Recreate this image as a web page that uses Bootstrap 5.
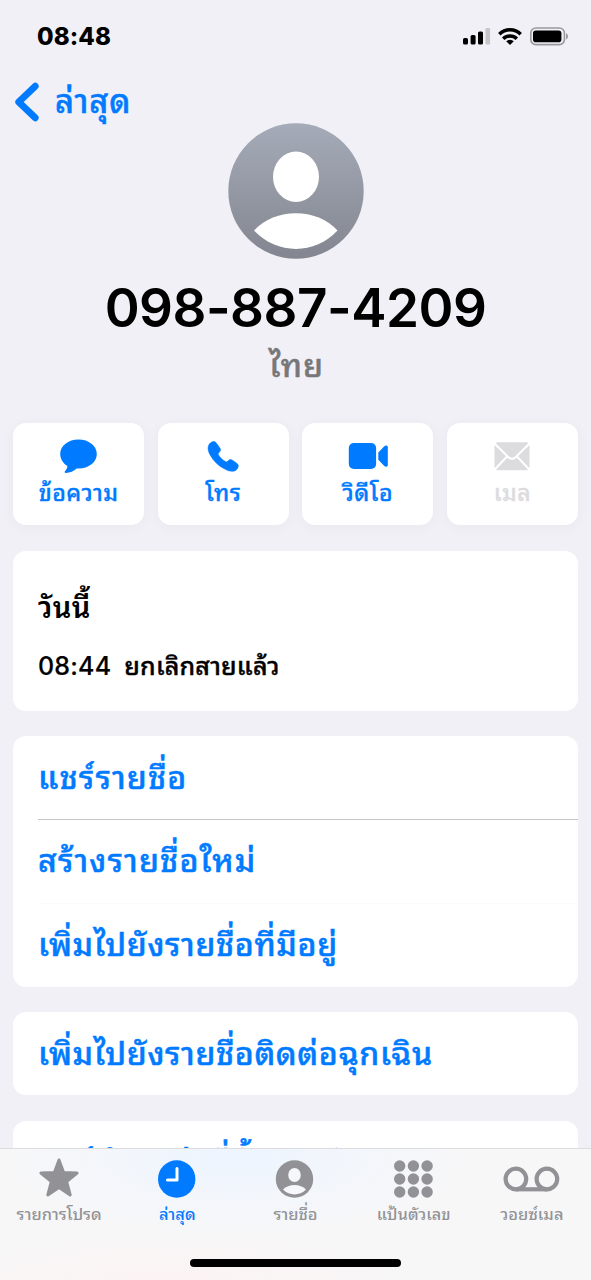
<!DOCTYPE html>
<html lang="th">
<head>
<meta charset="utf-8">
<meta name="viewport" content="width=device-width, initial-scale=1">
<title>098-887-4209</title>
<link href="https://cdn.jsdelivr.net/npm/bootstrap@5.3.0/dist/css/bootstrap.min.css" rel="stylesheet">
<style>
  :root { --ios-blue: #007aff; --ios-gray: #929296; }
  body { background: #f1f0f6; color: #000; font-family: Inter, "Noto Sans Thai Looped", "Noto Sans Thai", "Loma", "Noto Sans", sans-serif; font-weight: 500; }
  .phone { height: 1280px; overflow: hidden; }
  .statusbar { height: 72px; padding: 0 22px 0 37px; }
  .clock { font-size: 24px; font-weight: 800; line-height: 73px; letter-spacing: .1px; }
  .backlink { height: 51px; padding: 8px 0 0 15px; color: var(--ios-blue); font-size: 32.5px; line-height: 40px; letter-spacing: 1px; text-decoration: none; -webkit-text-stroke: .5px; }
  .backlink svg { margin-right: 16px; }
  .phone-number { font-size: 53px; font-weight: 600; line-height: 64px; margin-top: 17px; letter-spacing: -.5px; }
  .place { font-size: 32px; line-height: 40px; margin-top: 6px; padding-left: 2px; color: #77777a; letter-spacing: 1px; -webkit-text-stroke: .5px; }
  .actions { margin-top: 37px; padding: 0 13px; gap: 13.5px; }
  .tile { height: 102px; border-radius: 13px; background: #fff; color: var(--ios-blue); box-shadow: 0 2px 14px rgba(60,60,90,.045); font-size: 23px; line-height: 35px; letter-spacing: .5px; text-decoration: none; padding-top: 15px; -webkit-text-stroke: .35px; }
  .tile svg { height: 38px; flex: none; }
  .tile.off { color: #dcdcde; }
  .sheet { margin: 0 13px; border-radius: 13px; background: #fff; overflow: hidden; }
  .today { margin-top: 26px; height: 160px; padding: 36px 25px 0; }
  .today h2 { font-size: 29px; line-height: 42px; margin: 0; font-weight: 600; letter-spacing: .4px; }
  .call-row { font-size: 25px; line-height: 36px; margin-top: 19px; gap: 13px; }
  .call-row span:first-child { letter-spacing: .2px; -webkit-text-stroke: .2px; }
  .call-row span + span { letter-spacing: .2px; -webkit-text-stroke: .4px; }
  .group { margin-top: 25px; }
  .group + .group + .group { margin-top: 26px; }
  .group + .group:not(:nth-last-child(2)) { margin-top: 25px; }
  .item { display: block; height: 83px; margin-left: 25px; line-height: 83px; font-size: 32px; letter-spacing: 1.2px; color: var(--ios-blue); text-decoration: none; white-space: nowrap; -webkit-text-stroke: .5px; }
  .item + .item { height: 84px; border-top: 1px solid #fafafa; line-height: 82px; }
  .item + .item.ruled { border-top-color: #c6c6c8; }
  .item.tight { letter-spacing: .65px; }
  .tabs { height: 132px; border-top: 1px solid #dcdce0; background: radial-gradient(ellipse 230px 75px at 235px 10px, #eef5ff 0, rgba(238,245,255,0) 100%), radial-gradient(ellipse 260px 50px at 170px 132px, #fcf3f3 0, rgba(252,243,243,0) 100%), #f7f7f8; }
  .tab { color: var(--ios-gray); font-size: 16.4px; line-height: 28px; text-decoration: none; width: 118.2px; padding-top: 9px; }
  .tab svg { height: 42px; flex: none; }
  .tab.on { color: var(--ios-blue); }
  .homebar { width: 211px; height: 8px; bottom: 13px; left: 190px; background: #000; border-radius: 4px; }
</style>
</head>
<body>
<div class="phone d-flex flex-column position-relative">
  <header class="statusbar d-flex justify-content-between flex-shrink-0">
    <div class="clock">08:48</div>
    <svg width="107" height="72" viewBox="462 0 107 72">
      <rect x="463" y="38" width="5" height="6.5" rx="1.6"/><rect x="470.6" y="35" width="5" height="9.5" rx="1.6"/><rect x="478" y="31.5" width="5" height="13" rx="1.6"/><rect x="485.5" y="28" width="4.6" height="16.5" rx="1.3" fill="#c6c6ca"/>
      <g fill="none" stroke="#000" stroke-width="3.5"><path d="M499.3 34.2a15.2 15.2 0 0 1 21.400 0"/><path d="M503.2 38.700a9.700 9.700 0 0 1 13.600 0"/></g><path d="M506.200 41.300a5.500 5.500 0 0 1 7.600 0L510 45z"/>
      <rect x="530.800" y="28" width="33.600" height="16.600" rx="5" fill="none" stroke="#99999e" stroke-width="1.600"/><rect x="533" y="30.400" width="28.400" height="11.800" rx="2.800"/><path d="M566 33.200c2.600.8 2.600 5.400 0 6.400z" fill="#99999e"/>
    </svg>
  </header>
  <a href="#" class="backlink d-flex align-items-center flex-shrink-0"><svg width="24" height="40" viewBox="0 0 24 40"><path d="M20.200 4.200 3.700 20l16.500 15.800" fill="none" stroke="#007aff" stroke-width="6.800" stroke-linecap="round" stroke-linejoin="round"/></svg><span>ล่าสุด</span></a>
  <section class="text-center flex-shrink-0">
    <svg class="d-block mx-auto" width="136" height="136" viewBox="0 0 136 136"><defs><linearGradient id="av" x2="0" y2="1"><stop stop-color="#a5abb8"/><stop offset="1" stop-color="#838690"/></linearGradient></defs><circle cx="68" cy="68" r="67.700" fill="url(#av)"/><ellipse cx="68" cy="53.800" rx="23" ry="25.200" fill="#fff"/><path d="M26 107.500C47 84.500 89 84.500 109.500 107.500C87 132 49 132 26 107.500Z" fill="#fff"/></svg>
    <div class="phone-number">098-887-4209</div>
    <div class="place">ไทย</div>
  </section>
  <nav class="actions d-flex flex-shrink-0">
    <a href="#" class="tile flex-fill w-100 d-flex flex-column align-items-center"><svg width="40" height="38" viewBox="0 0 40 38"><path d="M19.500 1.500c10.300 0 18.300 6.300 18.300 14.500s-8 14.500-18.300 14.500h-1.800c-3 2.600-6.700 4.300-10.700 4.400-1.500 0-1.700-.9-.9-1.800 1.300-1.400 2.200-3.200 2.300-5.100C4 25.300 1.200 21 1.200 16c0-8.200 8-14.500 18.300-14.500z" fill="currentColor"/></svg><span>ข้อความ</span></a>
    <a href="#" class="tile flex-fill w-100 d-flex flex-column align-items-center"><svg width="32" height="38" viewBox="0 0 32 38"><path d="M3.300 5c2-1.800 4.500-2 6-.1l3.500 4.900c1.200 1.800 1 3.100-.7 4.600-1 .9-1.100 1.600-.4 2.800 1.600 2.600 3.600 4.300 6.300 6.100 1.200.8 2 .7 2.900-.3 1.500-1.700 2.900-1.900 4.700-.7l4.200 3c2.100 1.600 2 3.700.2 5.900-2.700 3.100-7.200 2.700-12.200-.1C11.200 27.900 6.300 22.700 3.100 16.900.5 12.200.2 7.800 3.300 5z" fill="currentColor" stroke="currentColor" stroke-width=".5"/></svg><span>โทร</span></a>
    <a href="#" class="tile flex-fill w-100 d-flex flex-column align-items-center"><svg width="40" height="38" viewBox="0 0 40 38"><rect x=".8" y="5" width="27.300" height="26" rx="5" fill="currentColor"/><path d="M30.300 14.500 36.300 8.300c1.300-1.300 3.500-.9 3.500 1v17.600c0 1.900-2.200 2.300-3.500 1L30.300 21.700z" fill="currentColor"/></svg><span>วิดีโอ</span></a>
    <a href="#" class="tile off flex-fill w-100 d-flex flex-column align-items-center"><svg width="36" height="38" viewBox="0 0 36 38"><rect x=".5" y="4.300" width="35" height="28" rx="3.500" fill="currentColor"/><path d="m.5 5.500 14 13.700c2.600 2.500 4.400 2.500 7 0l14-13.700M.8 31.500 13 18.500M35.200 31.500 23 18.500" fill="none" stroke="#fff" stroke-width="2"/></svg><span>เมล</span></a>
  </nav>
  <section class="sheet today flex-shrink-0">
    <h2>วันนี้</h2>
    <div class="call-row d-flex"><span>08:44</span><span>ยกเลิกสายแล้ว</span></div>
  </section>
  <section class="sheet group flex-shrink-0">
    <a href="#" class="item">แชร์รายชื่อ</a>
    <a href="#" class="item ruled">สร้างรายชื่อใหม่</a>
    <a href="#" class="item tight">เพิ่มไปยังรายชื่อที่มีอยู่</a>
  </section>
  <section class="sheet group flex-shrink-0"><a href="#" class="item tight">เพิ่มไปยังรายชื่อติดต่อฉุกเฉิน</a></section>
  <section class="sheet group flex-shrink-0"><a href="#" class="item tight">แชร์ตำแหน่งที่ตั้งของฉัน</a></section>

  <nav class="tabs position-absolute bottom-0 start-0 end-0 d-flex">
    <a href="#" class="tab d-flex flex-column align-items-center"><svg width="42" height="42" viewBox="0 0 42 42"><path d="m21 2 4.600 12.500 13.500.5L28.600 23.500l3.600 13.500L21 29.500 9.800 37 13.400 23.500 2.900 15l13.500-.5z" fill="currentColor" stroke="currentColor" stroke-width="3" stroke-linejoin="round"/></svg><span>รายการโปรด</span></a>
    <a href="#" class="tab on d-flex flex-column align-items-center"><svg width="42" height="42" viewBox="0 0 42 42"><circle cx="20.700" cy="21" r="18.700" fill="currentColor"/><path d="M21 10.500V22h-9.500" fill="none" stroke="#fff" stroke-width="3" stroke-linecap="round" stroke-linejoin="round"/></svg><span>ล่าสุด</span></a>
    <a href="#" class="tab d-flex flex-column align-items-center"><svg width="42" height="42" viewBox="0 0 42 42"><circle cx="20.500" cy="21" r="18.700" fill="currentColor"/><ellipse cx="20.500" cy="17" rx="6.300" ry="7" fill="#f5f7fb"/><path d="M9 31.500C14.500 25.500 26.500 25.500 32 31.500C25.500 38 15.500 38 9 31.500Z" fill="#f5f7fb"/></svg><span>รายชื่อ</span></a>
    <a href="#" class="tab d-flex flex-column align-items-center"><svg width="42" height="42" viewBox="0 0 42 42" fill="currentColor"><circle cx="6.700" cy="8" r="5.700"/><circle cx="20.400" cy="8" r="5.700"/><circle cx="34.100" cy="8" r="5.700"/><circle cx="6.700" cy="21" r="5.700"/><circle cx="20.400" cy="21" r="5.700"/><circle cx="34.100" cy="21" r="5.700"/><circle cx="6.700" cy="34" r="5.700"/><circle cx="20.400" cy="34" r="5.700"/><circle cx="34.100" cy="34" r="5.700"/></svg><span>แป้นตัวเลข</span></a>
    <a href="#" class="tab d-flex flex-column align-items-center"><svg width="58" height="42" viewBox="0 0 58 42" fill="none" stroke="currentColor" stroke-width="4.200"><circle cx="12.900" cy="21" r="10.300"/><circle cx="43.900" cy="21" r="10.300"/><path d="M12.900 31.300h31"/></svg><span>วอยซ์เมล</span></a>
    <div class="homebar position-absolute"></div>
  </nav>
</div>
<script src="https://cdn.jsdelivr.net/npm/bootstrap@5.3.0/dist/js/bootstrap.bundle.min.js"></script>
</body>
</html>
